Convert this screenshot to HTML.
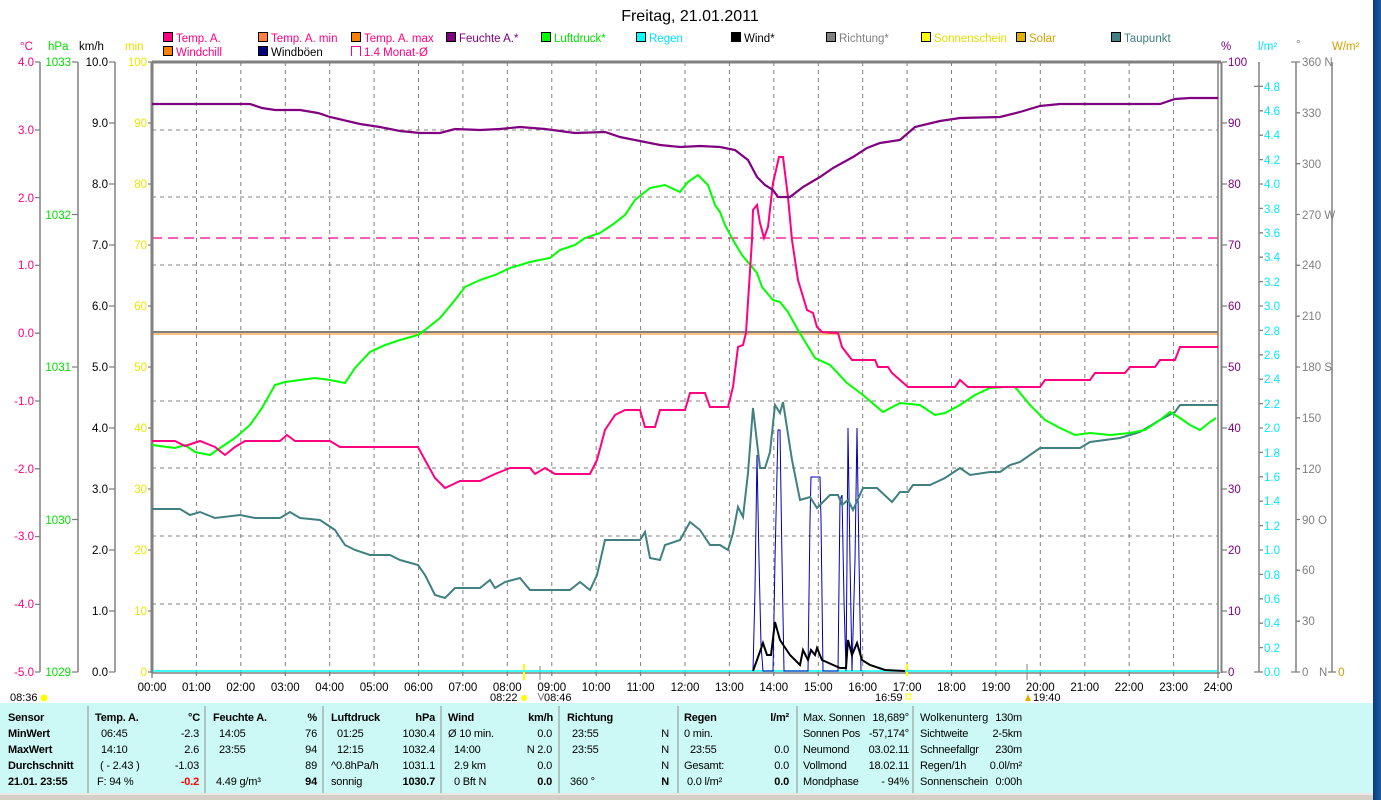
<!DOCTYPE html>
<html><head><meta charset="utf-8"><style>
html,body{margin:0;padding:0;background:#fff;width:1381px;height:800px;overflow:hidden}
svg{display:block}
text{font-family:"Liberation Sans",sans-serif;font-size:11.5px}
.b{font-weight:bold}
.p text{font-size:11px;letter-spacing:-0.2px}
</style></head><body>
<svg width="1381" height="800" viewBox="0 0 1381 800" xmlns="http://www.w3.org/2000/svg">
<rect width="1381" height="800" fill="#fff"/>
<text x="690" y="21" text-anchor="middle" style="font-size:16px">Freitag, 21.01.2011</text>

<g stroke="#000" stroke-width="1">
<rect x="163.5" y="32.5" width="9" height="9" fill="#ff0080"/>
<rect x="258.5" y="32.5" width="9" height="9" fill="#ff8040"/>
<rect x="351.5" y="32.5" width="9" height="9" fill="#ff8000"/>
<rect x="446.5" y="32.5" width="9" height="9" fill="#800080"/>
<rect x="541.5" y="32.5" width="9" height="9" fill="#00ff00"/>
<rect x="636.5" y="32.5" width="9" height="9" fill="#00ffff"/>
<rect x="731.5" y="32.5" width="9" height="9" fill="#000"/>
<rect x="826.5" y="32.5" width="9" height="9" fill="#808080"/>
<rect x="921.5" y="32.5" width="9" height="9" fill="#ffff00"/>
<rect x="1016.5" y="32.5" width="9" height="9" fill="#e0b000"/>
<rect x="1111.5" y="32.5" width="9" height="9" fill="#408080"/>
<rect x="163.5" y="46.5" width="9" height="9" fill="#ff8000"/>
<rect x="258.5" y="46.5" width="9" height="9" fill="#000080"/>
</g>
<path d="M351.5 56 V46.5 H360.5 V56" fill="none" stroke="#ff0080"/>
<g>
<text x="176" y="42" fill="#ff0080">Temp. A.</text>
<text x="271" y="42" fill="#ff0080">Temp. A. min</text>
<text x="364" y="42" fill="#ff0080">Temp. A. max</text>
<text x="459" y="42" fill="#800080">Feuchte A.*</text>
<text x="554" y="42" fill="#00e000">Luftdruck*</text>
<text x="649" y="42" fill="#00e0ff">Regen</text>
<text x="744" y="42" fill="#000">Wind*</text>
<text x="839" y="42" fill="#808080">Richtung*</text>
<text x="934" y="42" fill="#e0e000">Sonnenschein</text>
<text x="1029" y="42" fill="#d0a000">Solar</text>
<text x="1124" y="42" fill="#408080">Taupunkt</text>
<text x="176" y="56" fill="#ff0080">Windchill</text>
<text x="271" y="56" fill="#000">Windböen</text>
<text x="364" y="56" fill="#ff0080">1.4 Monat-Ø</text>
</g>
<text x="20" y="50" fill="#ff0080">°C</text>
<text x="48" y="50" fill="#00e000">hPa</text>
<text x="79" y="50" fill="#000">km/h</text>
<text x="125" y="50" fill="#e0e000">min</text>
<text x="1221" y="50" fill="#800080">%</text>
<text x="1258" y="50" fill="#00e0ff">l/m²</text>
<text x="1296" y="48" fill="#808080">°</text>
<text x="1332" y="50" fill="#d0a000">W/m²</text>

<g stroke="#808080" stroke-width="1.5">
<line x1="40" y1="62" x2="40" y2="672"/>
<line x1="78" y1="62" x2="78" y2="672"/>
<line x1="115" y1="62" x2="115" y2="672"/>
<line x1="1259" y1="62" x2="1259" y2="672"/>
<line x1="1296" y1="62" x2="1296" y2="672"/>
<line x1="1332" y1="62" x2="1332" y2="672"/>
</g>

<g stroke="#808080" stroke-width="1" stroke-dasharray="4,4">
<path d="M196.4 62V672M240.8 62V672M285.3 62V672M329.7 62V672M374.1 62V672M418.5 62V672M462.9 62V672M507.3 62V672M551.8 62V672M596.2 62V672M640.6 62V672M685 62V672M729.4 62V672M773.8 62V672M818.3 62V672M862.7 62V672M907.1 62V672M951.5 62V672M995.9 62V672M1040.3 62V672M1084.8 62V672M1129.2 62V672M1173.6 62V672"/>
<path d="M152 130H1218M152 197H1218M152 265H1218M152 401H1218M152 468H1218M152 536H1218M152 604H1218"/>
</g>
<line x1="152" y1="334" x2="1218" y2="334" stroke="#ff8000" stroke-width="1"/>
<line x1="152" y1="332" x2="1218" y2="332" stroke="#808080" stroke-width="2"/>
<line x1="152" y1="238" x2="1218" y2="238" stroke="#ff0080" stroke-width="1.3" stroke-dasharray="10,6"/>

<g stroke="#808080" fill="none">
<line x1="152" y1="62" x2="1221" y2="62" stroke-width="3"/>
<line x1="152" y1="62" x2="152" y2="673" stroke-width="3"/>
<line x1="1218" y1="62" x2="1218" y2="673" stroke-width="1.5"/>
<line x1="1221.5" y1="62" x2="1221.5" y2="673" stroke-width="2"/>
<line x1="152" y1="673" x2="1220" y2="673" stroke-width="1.5"/>
</g>

<g stroke="#808080" stroke-width="1.3">
<path d="M35 62H40M35 130H40M35 197.6H40M35 265.4H40M35 333.2H40M35 401H40M35 468.8H40M35 536.6H40M35 604.4H40M35 672H40"/>
<path d="M72 62H78M72 214.5H78M72 367H78M72 519.5H78M72 672H78"/>
<path d="M109 62H115M109 123H115M109 184H115M109 245H115M109 306H115M109 367H115M109 428H115M109 489H115M109 550H115M109 611H115M109 672H115"/>
<path d="M148 62H152M148 123H152M148 184H152M148 245H152M148 306H152M148 367H152M148 428H152M148 489H152M148 550H152M148 611H152M148 672H152"/>
<path d="M1222 62H1227M1222 123H1227M1222 184H1227M1222 245H1227M1222 306H1227M1222 367H1227M1222 428H1227M1222 489H1227M1222 550H1227M1222 611H1227M1222 672H1227"/>
<path d="M1254 86.4H1263M1259 110.8H1263M1259 135.2H1263M1259 159.6H1263M1259 184H1263M1259 208.4H1263M1259 232.8H1263M1259 257.2H1263M1259 281.6H1263M1259 306H1263M1259 330.4H1263M1259 354.8H1263M1259 379.2H1263M1259 403.6H1263M1259 428H1263M1259 452.4H1263M1259 476.8H1263M1259 501.2H1263M1259 525.6H1263M1259 550H1263M1259 574.4H1263M1259 598.8H1263M1259 623.2H1263M1259 647.6H1263M1254 672H1263"/>
<path d="M1291 62H1300M1296 112.8H1300M1296 163.7H1300M1296 214.5H1300M1296 265.3H1300M1296 316.2H1300M1296 367H1300M1296 417.8H1300M1296 468.7H1300M1296 519.5H1300M1296 570.3H1300M1296 621.2H1300M1291 672H1300"/>
<path d="M1328 672H1336"/>
<path d="M152 672V678M196.4 672V676M240.8 672V676M285.3 672V676M329.7 672V676M374.1 672V676M418.5 672V676M462.9 672V676M507.3 672V676M551.8 672V676M596.2 672V676M640.6 672V676M685 672V676M729.4 672V676M773.8 672V676M818.3 672V676M862.7 672V676M907.1 672V676M951.5 672V676M995.9 672V676M1040.3 672V676M1084.8 672V676M1129.2 672V676M1173.6 672V676M1218 672V678"/>
</g>

<g fill="#ff0080" text-anchor="end" style="font-size:12px">
<text x="34" y="66">4.0</text><text x="34" y="134">3.0</text><text x="34" y="202">2.0</text><text x="34" y="269">1.0</text><text x="34" y="337">0.0</text><text x="34" y="405">-1.0</text><text x="34" y="473">-2.0</text><text x="34" y="540">-3.0</text><text x="34" y="608">-4.0</text><text x="34" y="676">-5.0</text>
</g>
<g fill="#00e000" text-anchor="end" style="font-size:12px">
<text x="71" y="66">1033</text><text x="71" y="219">1032</text><text x="71" y="371">1031</text><text x="71" y="524">1030</text><text x="71" y="676">1029</text>
</g>
<g fill="#000" text-anchor="end" style="font-size:12px">
<text x="108" y="66">10.0</text><text x="108" y="127">9.0</text><text x="108" y="188">8.0</text><text x="108" y="249">7.0</text><text x="108" y="310">6.0</text><text x="108" y="371">5.0</text><text x="108" y="432">4.0</text><text x="108" y="493">3.0</text><text x="108" y="554">2.0</text><text x="108" y="615">1.0</text><text x="108" y="676">0.0</text>
</g>
<g fill="#e8e800" text-anchor="end" style="font-size:12px">
<text x="147" y="66">100</text><text x="147" y="127">90</text><text x="147" y="188">80</text><text x="147" y="249">70</text><text x="147" y="310">60</text><text x="147" y="371">50</text><text x="147" y="432">40</text><text x="147" y="493">30</text><text x="147" y="554">20</text><text x="147" y="615">10</text><text x="147" y="676">0</text>
</g>
<g fill="#800080" style="font-size:12px">
<text x="1228" y="66">100</text><text x="1228" y="127">90</text><text x="1228" y="188">80</text><text x="1228" y="249">70</text><text x="1228" y="310">60</text><text x="1228" y="371">50</text><text x="1228" y="432">40</text><text x="1228" y="493">30</text><text x="1228" y="554">20</text><text x="1228" y="615">10</text><text x="1228" y="676">0</text>
</g>
<g fill="#00e8ff" style="font-size:12px">
<text x="1264" y="91">4.8</text><text x="1264" y="115">4.6</text><text x="1264" y="139">4.4</text><text x="1264" y="164">4.2</text><text x="1264" y="188">4.0</text><text x="1264" y="213">3.8</text><text x="1264" y="237">3.6</text><text x="1264" y="261">3.4</text><text x="1264" y="286">3.2</text><text x="1264" y="310">3.0</text><text x="1264" y="335">2.8</text><text x="1264" y="359">2.6</text><text x="1264" y="383">2.4</text><text x="1264" y="408">2.2</text><text x="1264" y="432">2.0</text><text x="1264" y="457">1.8</text><text x="1264" y="481">1.6</text><text x="1264" y="505">1.4</text><text x="1264" y="530">1.2</text><text x="1264" y="554">1.0</text><text x="1264" y="579">0.8</text><text x="1264" y="603">0.6</text><text x="1264" y="627">0.4</text><text x="1264" y="652">0.2</text><text x="1264" y="676">0.0</text>
</g>
<g fill="#808080" style="font-size:12px">
<text x="1302" y="66">360 N</text><text x="1302" y="117">330</text><text x="1302" y="168">300</text><text x="1302" y="219">270 W</text><text x="1302" y="269">240</text><text x="1302" y="320">210</text><text x="1302" y="371">180 S</text><text x="1302" y="422">150</text><text x="1302" y="473">120</text><text x="1302" y="524">90 O</text><text x="1302" y="574">60</text><text x="1302" y="625">30</text><text x="1302" y="676">0</text><text x="1319" y="676">N</text>
</g>
<text x="1338" y="676" fill="#d0a000" style="font-size:12px">0</text>

<g text-anchor="middle" style="font-size:12px">
<text x="152" y="691">00:00</text><text x="196.4" y="691">01:00</text><text x="240.8" y="691">02:00</text><text x="285.3" y="691">03:00</text><text x="329.7" y="691">04:00</text><text x="374.1" y="691">05:00</text><text x="418.5" y="691">06:00</text><text x="462.9" y="691">07:00</text><text x="507.3" y="691">08:00</text><text x="551.8" y="691">09:00</text><text x="596.2" y="691">10:00</text><text x="640.6" y="691">11:00</text><text x="685" y="691">12:00</text><text x="729.4" y="691">13:00</text><text x="773.8" y="691">14:00</text><text x="818.3" y="691">15:00</text><text x="862.7" y="691">16:00</text><text x="907.1" y="691">17:00</text><text x="951.5" y="691">18:00</text><text x="995.9" y="691">19:00</text><text x="1040.3" y="691">20:00</text><text x="1084.8" y="691">21:00</text><text x="1129.2" y="691">22:00</text><text x="1173.6" y="691">23:00</text><text x="1218" y="691">24:00</text>
</g>
<text x="10" y="701" style="font-size:11px">08:36</text><circle cx="44" cy="698" r="3.5" fill="#ffff00"/>
<text x="490" y="701" style="font-size:11px">08:22</text><circle cx="524" cy="698" r="3" fill="#ffff00"/>
<text x="544" y="701" style="font-size:11px">08:46</text><path d="M538 693 L541 700 L544 693" fill="none" stroke="#808080"/>
<line x1="524" y1="664" x2="524" y2="680" stroke="#ffff00" stroke-width="2"/>
<line x1="540" y1="666" x2="540" y2="680" stroke="#808080" stroke-width="1"/>
<text x="875" y="701" style="font-size:11px">16:59</text><rect x="906" y="694" width="5" height="5" fill="none" stroke="#ffff00"/>
<line x1="907" y1="664" x2="907" y2="676" stroke="#ffff00" stroke-width="2"/>
<line x1="1027" y1="664" x2="1027" y2="680" stroke="#808080" stroke-width="1"/>
<text x="1033" y="701" style="font-size:11px">19:40</text><path d="M1025 701 L1028 694 L1031 701Z" fill="#e0b000"/>

<line x1="153" y1="671" x2="1217" y2="671" stroke="#00ffff" stroke-width="1.5"/>

<polyline fill="none" stroke="#0000b0" stroke-width="1" points="753,671 755,590 757,455 759,560 761,645 763,671 773,671 775,560 778,430 780,430 782,560 784,671 808,671 810,520 811,477 820,477 821,520 823,671 838,671 840,500 842,495 844,600 846,671 847,560 848,428 850,560 852,671 855,560 857,428 859,560 861,671"/>

<polyline fill="none" stroke="#000" stroke-width="2" points="753,671 757,660 763,643 767,655 771,655 775,622 780,640 790,655 800,665 803,650 808,660 811,650 815,655 817,648 822,660 840,668 846,668 848,640 852,655 857,643 862,660 870,665 885,670 905,671"/>

<polyline fill="none" stroke="#408080" stroke-width="2" points="152,509 180,509 190,515 200,512 215,518 240,515 255,518 280,518 290,512 300,518 320,520 335,530 345,545 355,550 370,555 390,555 400,560 418,565 425,575 435,595 445,598 455,588 480,588 490,580 495,588 505,582 520,578 530,590 570,590 580,582 590,590 597,575 605,540 640,540 645,532 650,558 660,560 665,545 680,540 690,522 700,530 710,545 720,545 728,550 733,533 738,507 743,517 748,473 753,408 760,468 765,468 770,452 775,405 780,413 783,402 792,460 800,500 810,497 817,508 830,495 838,495 842,505 848,500 853,510 863,488 877,488 892,502 900,492 908,492 913,485 930,485 945,478 960,468 970,475 990,472 1000,472 1010,465 1020,462 1040,448 1080,448 1090,442 1120,438 1140,432 1160,420 1175,412 1180,405 1218,405"/>

<polyline fill="none" stroke="#00ff00" stroke-width="2" points="152,445 175,448 185,445 195,452 210,455 220,448 235,438 250,425 262,408 275,385 285,382 300,380 315,378 330,380 345,383 355,368 370,352 385,345 400,340 418,335 425,330 440,318 455,300 465,287 480,280 495,275 510,268 530,262 550,258 560,250 575,245 585,238 600,233 612,225 625,215 635,200 650,188 665,185 680,192 688,182 698,175 708,185 715,205 720,212 725,225 733,240 742,255 757,273 762,287 773,300 780,302 788,312 798,330 815,358 830,365 847,383 863,395 883,412 900,403 920,405 935,415 945,413 960,405 975,395 990,388 1005,387 1015,387 1030,405 1045,420 1060,428 1075,435 1090,433 1110,435 1130,433 1145,430 1160,420 1170,412 1180,418 1190,425 1200,430 1210,422 1216,418"/>

<polyline fill="none" stroke="#ff0080" stroke-width="2" points="152,441 175,441 185,446 200,441 215,447 225,455 235,447 245,441 280,441 287,435 295,441 330,441 340,447 418,447 425,460 435,478 445,488 460,481 480,481 495,474 510,468 530,468 535,474 545,468 555,474 590,474 597,460 605,430 615,415 625,410 640,410 645,427 655,427 660,410 685,410 690,393 705,393 710,407 728,407 733,387 738,347 743,345 746,333 752,240 753,210 757,205 760,223 764,238 768,227 773,183 779,157 783,157 788,197 792,240 798,280 807,310 813,313 817,327 822,332 838,333 842,347 852,360 875,360 878,367 888,367 892,373 900,380 908,387 955,387 960,380 968,387 1000,387 1040,387 1045,380 1090,380 1095,373 1125,373 1130,367 1155,367 1160,360 1175,360 1180,347 1218,347"/>

<polyline fill="none" stroke="#800080" stroke-width="2.2" points="152,104 250,104 262,108 275,110 300,110 318,113 330,117 360,124 380,127 400,131 420,133 440,133 455,129 480,130 500,129 520,127 545,129 575,133 605,132 620,137 640,141 660,145 680,147 700,146 720,147 735,150 748,160 757,177 765,185 773,190 778,197 790,197 803,187 820,177 833,168 853,157 867,148 880,143 900,140 915,127 940,121 960,118 1000,117 1020,112 1040,106 1060,104 1160,104 1175,99 1190,98 1218,98"/>

<rect x="0" y="703" width="1373" height="90" fill="#ccf8f6"/>
<rect x="0" y="793" width="1373" height="7" fill="#d4d0c8"/>
<line x1="0" y1="794" x2="1373" y2="794" stroke="#fff"/>
<g stroke="#909090"><path d="M88 706V793M205 706V793M323 706V793M441 706V793M559 706V793M678 706V793M797 706V793M913 706V793"/></g>

<g class="p">
<text x="8" y="721" class="b">Sensor</text><text x="8" y="737" class="b">MinWert</text><text x="8" y="753" class="b">MaxWert</text><text x="8" y="769" class="b">Durchschnitt</text><text x="8" y="785" class="b">21.01. 23:55</text>

<text x="95" y="721" class="b">Temp. A.</text><text x="200" y="721" class="b" text-anchor="end">°C</text>
<text x="101" y="737">06:45</text><text x="199" y="737" text-anchor="end">-2.3</text>
<text x="101" y="753">14:10</text><text x="199" y="753" text-anchor="end">2.6</text>
<text x="100" y="769">( - 2.43 )</text><text x="199" y="769" text-anchor="end">-1.03</text>
<text x="97" y="785">F: 94 %</text><text x="199" y="785" text-anchor="end" class="b" fill="#ff0000">-0.2</text>

<text x="213" y="721" class="b">Feuchte A.</text><text x="317" y="721" class="b" text-anchor="end">%</text>
<text x="219" y="737">14:05</text><text x="317" y="737" text-anchor="end">76</text>
<text x="219" y="753">23:55</text><text x="317" y="753" text-anchor="end">94</text>
<text x="317" y="769" text-anchor="end">89</text>
<text x="216" y="785">4.49 g/m³</text><text x="317" y="785" text-anchor="end" class="b">94</text>

<text x="331" y="721" class="b">Luftdruck</text><text x="435" y="721" class="b" text-anchor="end">hPa</text>
<text x="337" y="737">01:25</text><text x="435" y="737" text-anchor="end">1030.4</text>
<text x="337" y="753">12:15</text><text x="435" y="753" text-anchor="end">1032.4</text>
<text x="331" y="769">^0.8hPa/h</text><text x="435" y="769" text-anchor="end">1031.1</text>
<text x="331" y="785">sonnig</text><text x="435" y="785" text-anchor="end" class="b">1030.7</text>

<text x="448" y="721" class="b">Wind</text><text x="553" y="721" class="b" text-anchor="end">km/h</text>
<text x="448" y="737">Ø 10 min.</text><text x="552" y="737" text-anchor="end">0.0</text>
<text x="454" y="753">14:00</text><text x="552" y="753" text-anchor="end">N 2.0</text>
<text x="454" y="769">2.9 km</text><text x="552" y="769" text-anchor="end">0.0</text>
<text x="454" y="785">0 Bft N</text><text x="552" y="785" text-anchor="end" class="b">0.0</text>

<text x="567" y="721" class="b">Richtung</text>
<text x="572" y="737">23:55</text><text x="669" y="737" text-anchor="end">N</text>
<text x="572" y="753">23:55</text><text x="669" y="753" text-anchor="end">N</text>
<text x="669" y="769" text-anchor="end">N</text>
<text x="570" y="785">360 °</text><text x="669" y="785" text-anchor="end" class="b">N</text>

<text x="684" y="721" class="b">Regen</text><text x="789" y="721" class="b" text-anchor="end">l/m²</text>
<text x="684" y="737">0 min.</text>
<text x="690" y="753">23:55</text><text x="789" y="753" text-anchor="end">0.0</text>
<text x="684" y="769">Gesamt:</text><text x="789" y="769" text-anchor="end">0.0</text>
<text x="687" y="785">0.0 l/m²</text><text x="789" y="785" text-anchor="end" class="b">0.0</text>

<text x="803" y="721" textLength="62">Max. Sonnen</text><text x="909" y="721" text-anchor="end">18,689°</text>
<text x="803" y="737" textLength="57">Sonnen Pos</text><text x="909" y="737" text-anchor="end">-57,174°</text>
<text x="803" y="753">Neumond</text><text x="909" y="753" text-anchor="end">03.02.11</text>
<text x="803" y="769">Vollmond</text><text x="909" y="769" text-anchor="end">18.02.11</text>
<text x="803" y="785">Mondphase</text><text x="909" y="785" text-anchor="end">- 94%</text>

<text x="920" y="721" textLength="68">Wolkenunterg</text><text x="1022" y="721" text-anchor="end">130m</text>
<text x="920" y="737">Sichtweite</text><text x="1022" y="737" text-anchor="end">2-5km</text>
<text x="920" y="753">Schneefallgr</text><text x="1022" y="753" text-anchor="end">230m</text>
<text x="920" y="769">Regen/1h</text><text x="1022" y="769" text-anchor="end">0.0l/m²</text>
<text x="920" y="785" textLength="68">Sonnenschein</text><text x="1022" y="785" text-anchor="end">0:00h</text>
</g>

<defs><linearGradient id="g" x1="0" y1="0" x2="1" y2="0"><stop offset="0" stop-color="#0a3c78"/><stop offset="1" stop-color="#1a5aa0"/></linearGradient></defs>
<rect x="1373" y="0" width="8" height="800" fill="url(#g)"/>
</svg>
</body></html>
